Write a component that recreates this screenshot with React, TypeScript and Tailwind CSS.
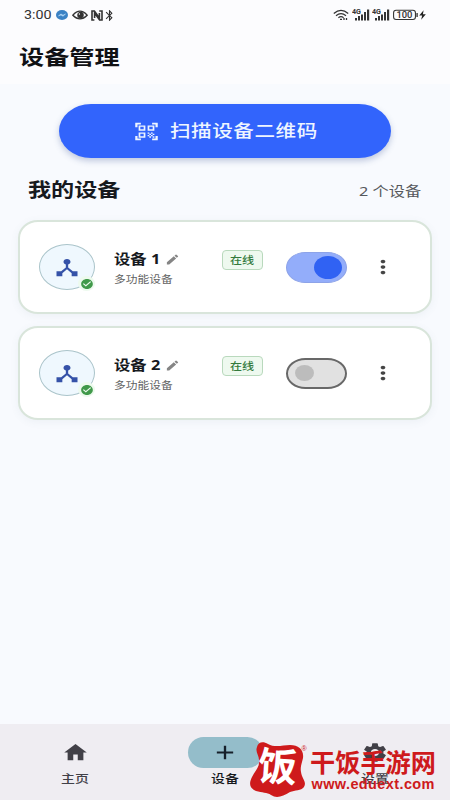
import { useState, type ReactNode } from "react";
import clsx from "clsx";
import {
  MdAdd,
  MdBluetooth,
  MdCheckCircle,
  MdDeviceHub,
  MdEdit,
  MdHome,
  MdMoreVert,
  MdQrCodeScanner,
  MdSettings,
} from "react-icons/md";

// Wide lettering: the box keeps its own width, the glyphs are stretched inside it
function Wide({ className, children }: { className?: string; children: ReactNode }) {
  return (
    <span className={clsx("block whitespace-nowrap", className)}>
      <span className="block w-max origin-left scale-x-[1.21]">{children}</span>
    </span>
  );
}

function Signal() {
  return (
    <svg viewBox="0 0 18 12" className="w-[18px] h-3" fill="#333">
      <text x="0" y="5.4" fontSize="7" fontWeight="700" fontFamily="Roboto, sans-serif" textLength="9" lengthAdjust="spacingAndGlyphs">4G</text>
      <rect x="3" y="9" width="2" height="2.5" />
      <rect x="6" y="7" width="2" height="4.5" />
      <rect x="9" y="5.5" width="2" height="6" />
      <rect x="12" y="3" width="2" height="8.5" />
      <rect x="15" y="0.5" width="2.2" height="11" />
    </svg>
  );
}

function StatusBar() {
  return (
    <div className="h-[30px] pl-[23.5px] pr-[23px] flex items-center justify-between text-[#333]">
      <div className="flex items-center">
        <span className="w-[31px] font-[Roboto,sans-serif] text-[13.5px] leading-none">
          <span className="block w-max origin-left scale-x-[1.06]">3:00</span>
        </span>
        <svg viewBox="0 0 12 10" className="ml-px w-3 h-2.5">
          <ellipse cx="6" cy="5" rx="6" ry="5" fill="#3b82c4" />
          <path d="M2.5 5.8 5 4l2 1.2 2.5-1.2L7 6.2 5 5Z" fill="#b5d8f5" stroke="#b5d8f5" strokeWidth=".6" />
        </svg>
        <svg viewBox="0 0 16 10" className="ml-1 w-4 h-2.5" fill="none" stroke="#333" strokeWidth="1.3">
          <path d="M.8 5.2Q8-2.8 15.2 5.2 8 12.5.8 5.2Z" />
          <circle cx="8.5" cy="5" r="2.6" fill="#333" />
          <circle cx="7.4" cy="4" r=".7" fill="#fff" stroke="none" />
        </svg>
        <svg viewBox="0 0 12 11" className="ml-[3px] w-3 h-[11px]" fill="none" stroke="#333">
          <path d="M3.4 10H1V1h2.4l5 7V3" strokeWidth="1.6" />
          <path d="M8.2 1H11v9H8.6L3.6 3v5" strokeWidth="1.6" />
        </svg>
        <MdBluetooth preserveAspectRatio="none" className="w-[13px] h-[13px]" />
      </div>
      <div className="flex items-center">
        <svg viewBox="0 0 16 12" className="w-4 h-3" fill="none" stroke="#333" strokeWidth="1.3">
          <path d="M.8 4.5Q8-1.8 15.2 4.5M3 6.7q5-4 10 0M5.4 8.7q2.6-2 5.2 0" />
          <path d="M7 10.3h2M11 9v2M13.5 9v2" />
        </svg>
        <span className="ml-[3px] flex gap-[2.5px]">
          <Signal />
          <Signal />
        </span>
        <svg viewBox="0 0 35 12" className="ml-[3px] w-[34px] h-3">
          <rect x=".6" y="1.2" width="22.5" height="9.4" rx="2.6" fill="none" stroke="#333" strokeWidth="1.1" />
          <text x="3.5" y="9" fontSize="8.6" fontWeight="500" fontFamily="Roboto, sans-serif" textLength="16.5" lengthAdjust="spacingAndGlyphs" fill="#333">100</text>
          <path d="M24.8 4v4" stroke="#333" strokeWidth="1.4" />
          <path d="m31.5 1-4.5 5.5h3L29 11l4.8-5.8h-3Z" fill="#222" />
        </svg>
      </div>
    </div>
  );
}

function DeviceCard({ name, initialOn }: { name: string; initialOn: boolean }) {
  const [on, setOn] = useState(initialOn);

  return (
    <div className="h-[94px] pl-[19px] pr-[32px] flex items-center bg-white border-2 border-[#d9e5db] rounded-[20px/18px] shadow-[0_2px_8px_rgba(90,110,130,0.07)]">
      <div className="relative w-14 h-[46px] shrink-0 rounded-[50%] bg-[#eff8fe] border-[1.5px] border-[#aac4ca] flex items-center justify-center">
        <MdDeviceHub preserveAspectRatio="none" className="w-7 h-[23px] text-[#3552a8]" />
        <span className="absolute left-[38px] top-[31px] w-[17px] h-[15px] rounded-[50%] bg-[#edfaee] flex items-center justify-center">
          <MdCheckCircle preserveAspectRatio="none" className="w-[14px] h-3 text-[#40994a]" />
        </span>
      </div>

      <div className="ml-[19px] w-[108px] shrink-0 mt-[3px]">
        <div className="flex items-center h-[18px]">
          <Wide className="w-[51px] text-[13.5px] font-bold text-[#171a1e]">{name}</Wide>
          <MdEdit preserveAspectRatio="none" className="w-[15px] h-[13px] text-[#858585]" />
        </div>
        <Wide className="mt-[5px] text-[9.7px] leading-[14px] text-[#626262]">多功能设备</Wide>
      </div>

      <span className="w-[41px] h-[20px] shrink-0 -mt-[14px] pl-[7px] rounded-[4px] border border-[#b9d9bd] bg-[#eef9ef] flex items-center">
        <Wide className="w-6 text-[10px] leading-none font-medium text-[#347a3c]">在线</Wide>
      </span>

      <button
        onClick={() => setOn(!on)}
        className={clsx(
          "ml-[23px] w-[61px] h-[31px] shrink-0 rounded-[20px/16px] flex items-center",
          on ? "justify-end pr-1 bg-[#93adfa] border border-[#8da3e8]" : "pl-[7px] bg-[#e1e1e1] border-2 border-[#686868]"
        )}
      >
        <span className={clsx("rounded-[50%]", on ? "w-7 h-[23px] bg-[#3062f3]" : "w-[19px] h-4 bg-[#bcbcbc]")} />
      </button>
      <MdMoreVert preserveAspectRatio="none" className="ml-[22px] w-7 h-[22px] shrink-0 text-[#454545]" />
    </div>
  );
}

function NavItem({ label, active, children }: { label: string; active?: boolean; children: ReactNode }) {
  return (
    <button className="flex-1 pt-[13px] flex flex-col items-center">
      <span className={clsx("w-[75px] h-[31px] rounded-full flex items-center justify-center", active && "bg-[#94bdca]")}>
        {children}
      </span>
      <Wide className={clsx("mt-[3px] w-7 text-[11.5px] leading-[16px] font-medium", active ? "text-[#16181c]" : "text-[#414047]")}>
        {label}
      </Wide>
    </button>
  );
}

function SiteLogo() {
  return (
    <svg viewBox="0 0 200 60" className="absolute right-0 bottom-0 w-[200px] h-[60px]" fill="#ce1a1c">
      <path d="M7 7C8 2 13 1 18 4c7 4 15 1 22 1 9 0 14 5 13 13-1 5-3 9-2 14 1 7 6 10 3 15-3 4-9 3-14 5-7 4-13 7-19 3-4-3-9-2-15-4C-1 48-1 43 2 37c3-6 8-10 7-17C9 15 5 12 7 7Z" />
      <text x="8" y="41" fontSize="39" fontWeight="700" fill="#fff" fontFamily="'Noto Sans CJK SC', sans-serif" transform="rotate(4 29 28)">饭</text>
      <text x="51.5" y="10.5" fontSize="7" fontFamily="'Liberation Sans', sans-serif">®</text>
      <text x="60" y="31.5" fontSize="25" fontWeight="700" fontFamily="'Noto Sans CJK SC', sans-serif" textLength="126" lengthAdjust="spacingAndGlyphs">干饭手游网</text>
      <text x="61.5" y="48.8" fontSize="14.5" fontWeight="700" fontFamily="'Liberation Sans', sans-serif" textLength="123">www.eduext.com</text>
    </svg>
  );
}

export default function App() {
  return (
    <div className="relative w-[450px] h-[800px] overflow-hidden flex flex-col bg-[#f8fafe] font-['Noto_Sans','Noto_Sans_CJK_SC',sans-serif]">
      <header className="h-[84px] bg-[#fcfcfe]">
        <StatusBar />
        <h1 className="pl-[19px] pt-[12px]">
          <Wide className="text-[20.8px] leading-[30px] font-bold text-[#101114]">设备管理</Wide>
        </h1>
      </header>

      <main className="flex-1 px-[18px] pt-[20px]">
        <button className="mx-auto w-[332px] h-[54px] pl-[74px] rounded-[32px/27px] bg-[#3264fc] shadow-[0_3px_6px_rgba(60,85,150,0.3)] flex items-center text-[#eef5ff]">
          <MdQrCodeScanner preserveAspectRatio="none" className="w-[27px] h-[21px]" />
          <Wide className="ml-[10px] text-[17px] leading-6 font-medium tracking-[0.45px]">扫描设备二维码</Wide>
        </button>

        <div className="mt-[18px] pl-[10px] pr-[9px] h-[28px] flex items-center justify-between">
          <Wide className="text-[19.1px] font-bold text-[#16191e]">我的设备</Wide>
          <Wide className="w-[64px] mt-[2px] text-[13.4px] text-[#56585c]">2 个设备</Wide>
        </div>

        <div className="mt-4 flex flex-col gap-3">
          <DeviceCard name="设备 1" initialOn />
          <DeviceCard name="设备 2" initialOn={false} />
        </div>
      </main>

      <nav className="h-[76px] flex bg-[#efedf2]">
        <NavItem label="主页">
          <MdHome preserveAspectRatio="none" className="w-[27px] h-[23px] text-[#414047]" />
        </NavItem>
        <NavItem label="设备" active>
          <MdAdd preserveAspectRatio="none" className="w-7 h-[23px] text-[#16202a]" />
        </NavItem>
        <NavItem label="设置">
          <MdSettings preserveAspectRatio="none" className="w-7 h-[23px] text-[#414047]" />
        </NavItem>
      </nav>

      <SiteLogo />
    </div>
  );
}
